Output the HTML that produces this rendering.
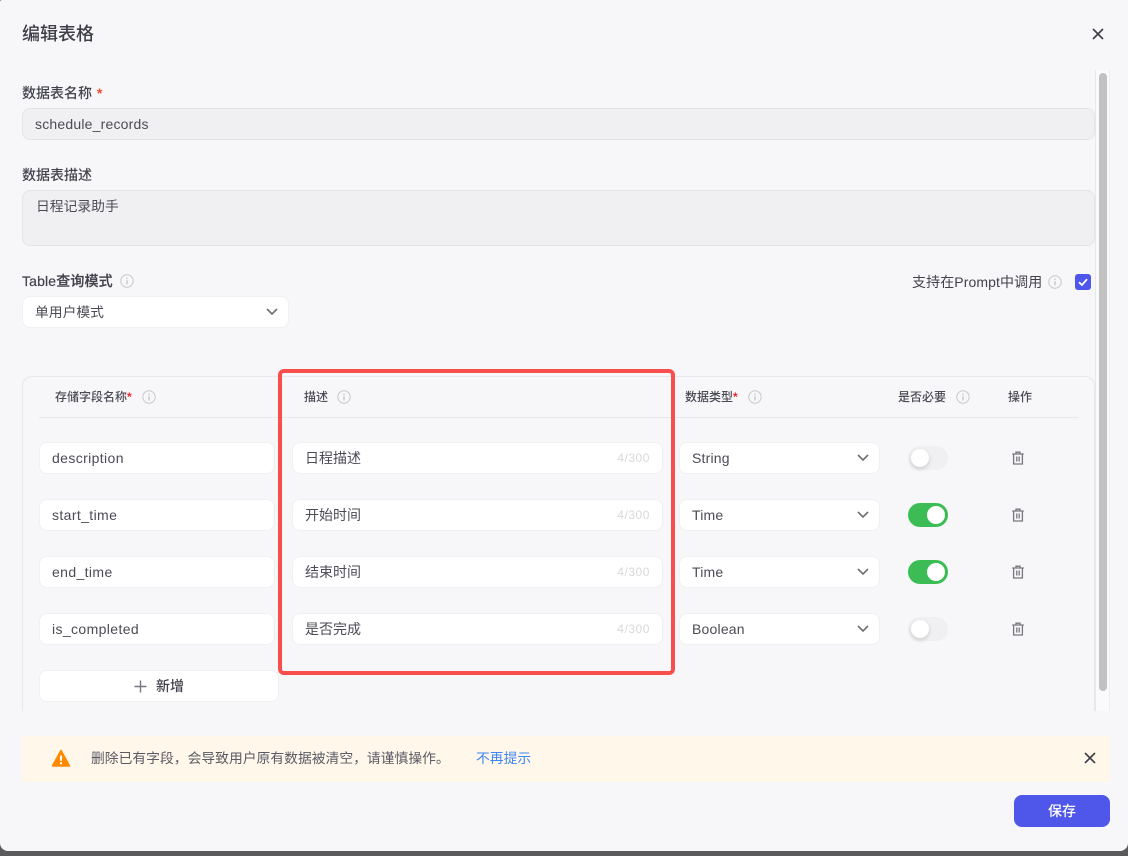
<!DOCTYPE html>
<html lang="zh-CN">
<head>
<meta charset="utf-8">
<title>编辑表格</title>
<style>
*{box-sizing:border-box;margin:0;padding:0}
html,body{width:1128px;height:856px;overflow:hidden;background:#5a5a5c}
body{position:relative;font-family:"Liberation Sans","Noto Sans CJK SC",sans-serif;color:#3d3d47}
#m{position:absolute;left:0;top:0;width:1128px;height:851px;background:#f7f7f9;border-radius:2px 0 8px 8px;overflow:hidden}
.a{position:absolute;white-space:nowrap}
.lb{font-size:14px;font-weight:500;line-height:20px;color:#42424c}
.th{font-size:12px;font-weight:500;line-height:18px;color:#4a4a54}
.inp{position:absolute;background:#fff;border:1px solid #f0f0f3;border-radius:8px;height:32px;font-size:14px;line-height:30px;padding-left:12px;color:#4b4b55;white-space:nowrap}
.ro{background:#f0f0f2;border-color:#e4e4e7}
.ls{letter-spacing:.38px}
.sl{letter-spacing:.2px}
.cnt{position:absolute;right:12px;top:0;font-size:12px;letter-spacing:.55px;color:#d8d8dc}
.sw{position:absolute;left:908px;width:40px;height:24px;border-radius:12px;background:#f0f0f2}
.sw i{position:absolute;left:3px;top:3px;width:18px;height:18px;border-radius:50%;background:#fff;box-shadow:0 2px 5px rgba(0,0,0,.16)}
.sw.on{background:#3cbc55}
.sw.on i{left:19px;box-shadow:none}
svg{position:absolute;display:block}
.req{color:#f5222d;font-weight:700}
</style>
</head>
<body>
<div id="m">
  <div class="a" style="left:22px;top:21px;font-size:18px;font-weight:500;line-height:26px;color:#3d3d47">编辑表格</div>
  <svg style="left:1091px;top:27px" width="14" height="14" viewBox="0 0 14 14"><path d="M2 2L12 12M12 2L2 12" stroke="#3d3d47" stroke-width="1.6" fill="none"/></svg>

  <div class="a lb" style="left:22px;top:83px">数据表名称 <span style="color:#f5492d;font-weight:700;margin-left:1px">*</span></div>
  <div class="inp ro" style="left:22px;top:108px;width:1073px;letter-spacing:.2px">schedule_records</div>

  <div class="a lb" style="left:22px;top:165px">数据表描述</div>
  <div class="inp ro" style="left:22px;top:190px;width:1073px;height:56px;line-height:32px;font-size:13.8px;padding-left:13px">日程记录助手</div>

  <div class="a lb" style="left:22px;top:271px;letter-spacing:.15px;-webkit-text-stroke:.2px #42424c">Table查询模式</div>
  <svg style="left:120px;top:274px" width="14" height="14" viewBox="0 0 14 14"><circle cx="7" cy="7" r="6.2" fill="none" stroke="#c9c9cd"/><path d="M7 6.2V10.4M7 3.6V5" stroke="#c0c0c5" stroke-width="1.2"/></svg>
  <div class="inp" style="left:22px;top:296px;width:267px;line-height:31px;font-size:13.8px">单用户模式</div>
  <svg style="left:266px;top:307px" width="12" height="10" viewBox="0 0 12 10"><path d="M1 2L6 7L11 2" stroke="#6e6e76" stroke-width="1.6" fill="none"/></svg>

  <div class="a" style="left:912px;top:272px;font-size:14px;line-height:20px;letter-spacing:.1px;color:#42424c">支持在Prompt中调用</div>
  <svg style="left:1048px;top:275px" width="14" height="14" viewBox="0 0 14 14"><circle cx="7" cy="7" r="6.2" fill="none" stroke="#c9c9cd"/><path d="M7 6.2V10.4M7 3.6V5" stroke="#c0c0c5" stroke-width="1.2"/></svg>
  <div class="a" style="left:1075px;top:274px;width:16px;height:16px;border-radius:3px;background:#4f56ea"></div>
  <svg style="left:1075px;top:274px" width="16" height="16" viewBox="0 0 16 16"><path d="M4 8.2L7 11L12 5.2" stroke="#fff" stroke-width="1.8" fill="none"/></svg>

  <!-- scrollbar -->
  <div class="a" style="left:1095px;top:70px;width:15px;height:641px;background:#fafafb;border-left:1px solid #e8e8ea;border-right:1px solid #eeeef0"></div>
  <div class="a" style="left:1099px;top:73px;width:8px;height:618px;border-radius:4px;background:#c1c1c1"></div>

  <!-- table -->
  <div class="a" style="left:22px;top:376px;width:1073px;height:335px;border:1px solid #e8e8ea;border-bottom:none;border-radius:10px 10px 0 0"></div>
  <div class="a" style="left:39px;top:417px;width:1039px;height:1px;background:#e8e8ea"></div>

  <div class="a th" style="left:55px;top:388px">存储字段名称<span class="req">*</span></div>
  <svg style="left:142px;top:390px" width="14" height="14" viewBox="0 0 14 14"><circle cx="7" cy="7" r="6.2" fill="none" stroke="#c9c9cd"/><path d="M7 6.2V10.4M7 3.6V5" stroke="#c0c0c5" stroke-width="1.2"/></svg>
  <div class="a th" style="left:304px;top:388px">描述</div>
  <svg style="left:337px;top:390px" width="14" height="14" viewBox="0 0 14 14"><circle cx="7" cy="7" r="6.2" fill="none" stroke="#c9c9cd"/><path d="M7 6.2V10.4M7 3.6V5" stroke="#c0c0c5" stroke-width="1.2"/></svg>
  <div class="a th" style="left:685px;top:388px">数据类型<span class="req">*</span></div>
  <svg style="left:748px;top:390px" width="14" height="14" viewBox="0 0 14 14"><circle cx="7" cy="7" r="6.2" fill="none" stroke="#c9c9cd"/><path d="M7 6.2V10.4M7 3.6V5" stroke="#c0c0c5" stroke-width="1.2"/></svg>
  <div class="a th" style="left:898px;top:388px">是否必要</div>
  <svg style="left:956px;top:390px" width="14" height="14" viewBox="0 0 14 14"><circle cx="7" cy="7" r="6.2" fill="none" stroke="#c9c9cd"/><path d="M7 6.2V10.4M7 3.6V5" stroke="#c0c0c5" stroke-width="1.2"/></svg>
  <div class="a th" style="left:1008px;top:388px">操作</div>

  <!-- row 1 -->
  <div class="inp ls" style="left:39px;top:442px;width:236px">description</div>
  <div class="inp" style="left:292px;top:442px;width:371px">日程描述<span class="cnt">4/300</span></div>
  <div class="inp sl" style="left:679px;top:442px;width:201px">String</div>
  <svg style="left:857px;top:453px" width="12" height="10" viewBox="0 0 12 10"><path d="M1 2L6 7L11 2" stroke="#6e6e76" stroke-width="1.6" fill="none"/></svg>
  <div class="sw" style="top:446px"><i></i></div>
  <svg style="left:1011px;top:451px" width="14" height="14" viewBox="0 0 14 14"><path d="M1.2 3H12.8M5 3V1.2H9V3M2.6 3V13H11.4V3M5.8 5.5V10.5M8.2 5.5V10.5" stroke="#77777f" stroke-width="1.3" fill="none"/></svg>

  <!-- row 2 -->
  <div class="inp ls" style="left:39px;top:499px;width:236px">start_time</div>
  <div class="inp" style="left:292px;top:499px;width:371px">开始时间<span class="cnt">4/300</span></div>
  <div class="inp sl" style="left:679px;top:499px;width:201px">Time</div>
  <svg style="left:857px;top:510px" width="12" height="10" viewBox="0 0 12 10"><path d="M1 2L6 7L11 2" stroke="#6e6e76" stroke-width="1.6" fill="none"/></svg>
  <div class="sw on" style="top:503px"><i></i></div>
  <svg style="left:1011px;top:508px" width="14" height="14" viewBox="0 0 14 14"><path d="M1.2 3H12.8M5 3V1.2H9V3M2.6 3V13H11.4V3M5.8 5.5V10.5M8.2 5.5V10.5" stroke="#77777f" stroke-width="1.3" fill="none"/></svg>

  <!-- row 3 -->
  <div class="inp ls" style="left:39px;top:556px;width:236px">end_time</div>
  <div class="inp" style="left:292px;top:556px;width:371px">结束时间<span class="cnt">4/300</span></div>
  <div class="inp sl" style="left:679px;top:556px;width:201px">Time</div>
  <svg style="left:857px;top:567px" width="12" height="10" viewBox="0 0 12 10"><path d="M1 2L6 7L11 2" stroke="#6e6e76" stroke-width="1.6" fill="none"/></svg>
  <div class="sw on" style="top:560px"><i></i></div>
  <svg style="left:1011px;top:565px" width="14" height="14" viewBox="0 0 14 14"><path d="M1.2 3H12.8M5 3V1.2H9V3M2.6 3V13H11.4V3M5.8 5.5V10.5M8.2 5.5V10.5" stroke="#77777f" stroke-width="1.3" fill="none"/></svg>

  <!-- row 4 -->
  <div class="inp ls" style="left:39px;top:613px;width:236px">is_completed</div>
  <div class="inp" style="left:292px;top:613px;width:371px">是否完成<span class="cnt">4/300</span></div>
  <div class="inp sl" style="left:679px;top:613px;width:201px">Boolean</div>
  <svg style="left:857px;top:624px" width="12" height="10" viewBox="0 0 12 10"><path d="M1 2L6 7L11 2" stroke="#6e6e76" stroke-width="1.6" fill="none"/></svg>
  <div class="sw" style="top:617px"><i></i></div>
  <svg style="left:1011px;top:622px" width="14" height="14" viewBox="0 0 14 14"><path d="M1.2 3H12.8M5 3V1.2H9V3M2.6 3V13H11.4V3M5.8 5.5V10.5M8.2 5.5V10.5" stroke="#77777f" stroke-width="1.3" fill="none"/></svg>

  <!-- add -->
  <div class="a" style="left:39px;top:670px;width:240px;height:32px;background:#fff;border:1px solid #f0f0f3;border-radius:8px"></div>
  <svg style="left:134px;top:680px" width="13" height="13" viewBox="0 0 13 13"><path d="M6.5 0.5V12.5M0.5 6.5H12.5" stroke="#77777f" stroke-width="1.4" fill="none"/></svg>
  <div class="a" style="left:156px;top:676px;font-size:14px;font-weight:500;line-height:20px;color:#42424c">新增</div>

  <!-- red highlight -->
  <div class="a" style="left:278px;top:369px;width:397px;height:306px;border:4px solid #f94f4c;border-radius:6px"></div>

  <!-- alert -->
  <div class="a" style="left:22px;top:736px;width:1088px;height:46px;background:#fff7ea"></div>
  <svg style="left:51px;top:749px" width="20" height="19" viewBox="0 0 20 19"><path d="M10 1.8L18.2 16.8H1.8Z" fill="#ff8a00" stroke="#ff8a00" stroke-width="2" stroke-linejoin="round"/><path d="M10 6.5V11.8M10 13.2V15.2" stroke="#fff" stroke-width="2" fill="none"/></svg>
  <div class="a" style="left:91px;top:749px;font-size:13.8px;line-height:20px;color:#5a5a64">删除已有字段，会导致用户原有数据被清空，请谨慎操作。</div>
  <div class="a" style="left:476px;top:749px;font-size:13.8px;line-height:20px;color:#3f86f5">不再提示</div>
  <svg style="left:1083px;top:751px" width="14" height="14" viewBox="0 0 14 14"><path d="M2 2L12 12M12 2L2 12" stroke="#3d3d47" stroke-width="1.6" fill="none"/></svg>

  <!-- save -->
  <div class="a" style="left:1014px;top:795px;width:96px;height:32px;border-radius:8px;background:#4f56ea;color:#fff;font-size:14px;font-weight:500;line-height:32px;text-align:center">保存</div>
</div>
</body>
</html>
